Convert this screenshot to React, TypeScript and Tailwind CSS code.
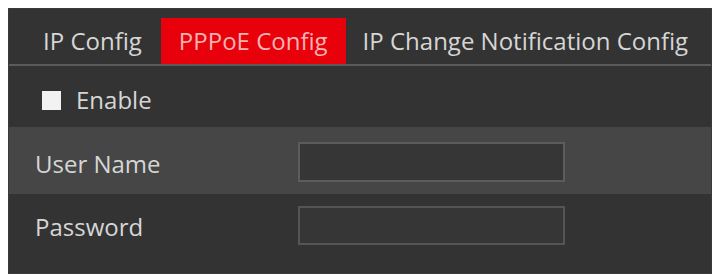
import React from "react";

export default function App() {
  const font = { fontFamily: '"Open Sans", "Noto Sans", "Liberation Sans", sans-serif' };
  return (
    <div className="w-[718px] h-[276px] bg-white p-[8px] pb-[2px] pr-[6px]" style={font}>
      <div className="w-full h-full bg-[#333333] flex flex-col border border-[#3a3a3a]">
        <div className="h-[55px] flex items-end pl-[15px] text-[24px] text-[#d6d6d6]">
          <div className="h-[46px] px-[19px] flex items-center">IP Config</div>
          <div className="h-[46px] px-[18px] flex items-center bg-[#e8000b] text-[#f6b3b3]">PPPoE Config</div>
          <div className="h-[46px] px-[17px] flex items-center">IP Change Notification Config</div>
        </div>
        <div className="h-[2px] bg-[#5a5a5a]" />
        <div className="h-[61px] flex items-center pl-[33px] text-[24px] text-[#d6d6d6]">
          <div className="w-[19px] h-[19px] bg-[#f2f2f2] mr-[15px] mt-[7px]" />
          <span className="mt-[6px]">Enable</span>
        </div>
        <div className="h-[67px] flex items-center bg-[#464646] pl-[26px] text-[24px] text-[#d6d6d6]">
          <span className="w-[263px] mt-[6px]">User Name</span>
          <div className="w-[267px] h-[40px] bg-[#363636] border-2 border-[#5c5c5c] mt-[3px]" />
        </div>
        <div className="h-[62px] flex items-center pl-[26px] text-[24px] text-[#d6d6d6]">
          <span className="w-[263px] mt-[3px]">Password</span>
          <div className="w-[267px] h-[39px] bg-[#363636] border-2 border-[#555555]" />
        </div>
      </div>
    </div>
  );
}
